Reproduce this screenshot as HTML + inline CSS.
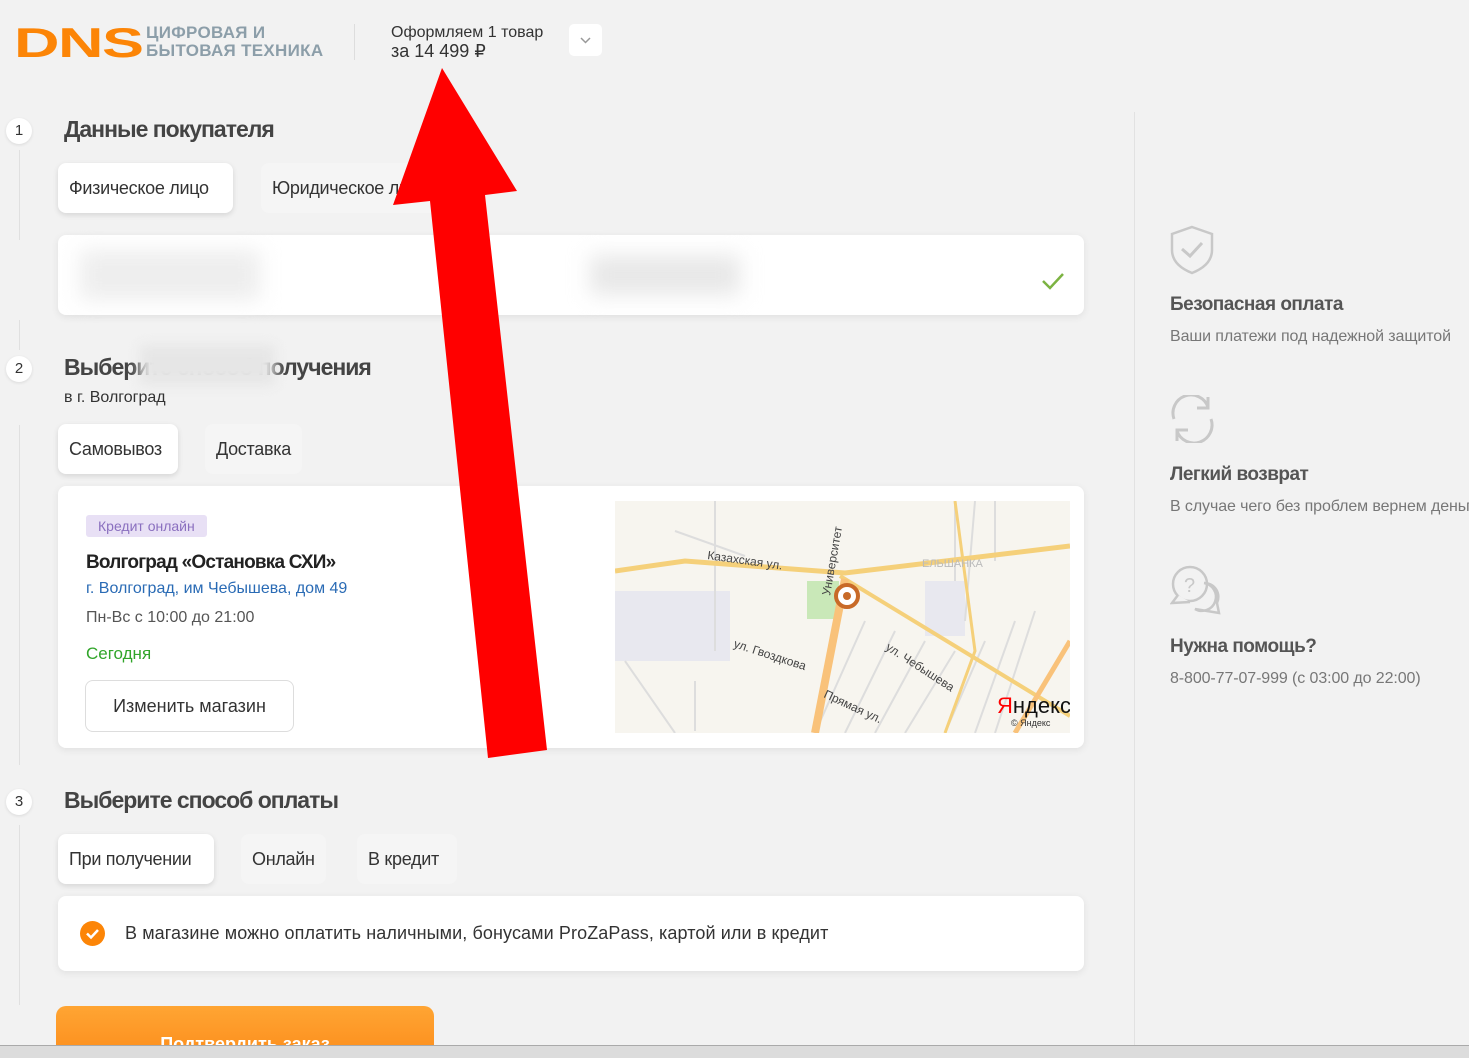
<!DOCTYPE html>
<html><head><meta charset="utf-8"><style>
*{box-sizing:border-box;margin:0;padding:0}
body{width:1469px;height:1058px;overflow:hidden;background:#f2f2f2;font-family:"Liberation Sans","DejaVu Sans",sans-serif;color:#333;position:relative}
.a{position:absolute}
.btn{position:absolute;background:#f5f5f5;border-radius:8px;font-size:18px;color:#333;padding:0 11px;line-height:50px;height:50px;letter-spacing:-.3px}
.btn.sel{background:#fff;box-shadow:0 2px 6px rgba(0,0,0,.12)}
.card{position:absolute;background:#fff;border-radius:8px;box-shadow:0 2px 8px rgba(0,0,0,.08)}
.num{position:absolute;left:6px;width:26px;height:26px;border-radius:50%;background:#fff;font-size:15px;text-align:center;line-height:26px;box-shadow:0 1px 3px rgba(0,0,0,.1)}
.h{position:absolute;left:64px;font-size:23px;font-weight:bold;color:#444;letter-spacing:-1px}
.vl{position:absolute;left:19px;width:1px;background:#e0e0e0}
.side h3{font-size:19px;color:#555;font-weight:bold;letter-spacing:-.5px}
.side p{font-size:16px;color:#777;margin-top:12px;white-space:nowrap;letter-spacing:-.1px}
</style></head><body>
<div class="a" style="left:14px;top:23px;font-size:42px;font-weight:bold;color:#fc8507;letter-spacing:-1px;line-height:40px;transform:scaleX(1.5);transform-origin:0 0">DNS</div>
<div class="a" style="left:146px;top:24px;font-size:17px;font-weight:bold;color:#8c9ea9;line-height:18px;letter-spacing:.3px">ЦИФРОВАЯ И<br>БЫТОВАЯ ТЕХНИКА</div>
<div class="a" style="left:354px;top:24px;width:1px;height:36px;background:#ddd"></div>
<div class="a" style="left:391px;top:24px;font-size:16px;line-height:18px;color:#333">Оформляем 1 товар<br><span style="font-size:18px">за 14 499 ₽</span></div>
<div class="a" style="left:569px;top:24px;width:33px;height:32px;background:#fff;border-radius:5px"><svg width="33" height="32"><path d="M12 14l4.5 4.5L21 14" stroke="#999" stroke-width="1.5" fill="none"/></svg></div>

<div class="vl" style="top:150px;height:90px"></div>
<div class="vl" style="top:320px;height:30px"></div>
<div class="vl" style="top:425px;height:340px"></div>
<div class="vl" style="top:825px;height:180px"></div>

<div class="num" style="top:118px">1</div>
<div class="h" style="top:116px">Данные покупателя</div>
<div class="btn sel" style="left:58px;top:163px;width:175px">Физическое лицо</div>
<div class="btn" style="left:261px;top:163px">Юридическое лицо</div>
<div class="card" style="left:58px;top:235px;width:1026px;height:80px"></div>
<div class="a" style="left:80px;top:250px;width:180px;height:50px;background:#eee;filter:blur(10px)"></div>
<div class="a" style="left:590px;top:255px;width:150px;height:40px;background:#e8e8e8;filter:blur(10px)"></div>
<svg class="a" style="left:1040px;top:270px" width="26" height="22"><path d="M3 11l7 7L23 4" stroke="#7cb342" stroke-width="2.5" fill="none"/></svg>

<div class="num" style="top:356px">2</div>
<div class="h" style="top:354px">Выберите способ получения</div>
<div class="a" style="left:140px;top:345px;width:135px;height:40px;background:#e6e6e6;filter:blur(6px)"></div>
<div class="a" style="left:64px;top:389px;font-size:16px">в г. Волгоград</div>
<div class="btn sel" style="left:58px;top:424px;width:120px">Самовывоз</div>
<div class="btn" style="left:205px;top:424px">Доставка</div>
<div class="card" style="left:58px;top:486px;width:1026px;height:262px"></div>
<div class="a" style="left:86px;top:515px;background:#e8e0f5;color:#8a6fbf;font-size:14px;padding:3px 12px;border-radius:3px">Кредит онлайн</div>
<div class="a" style="left:86px;top:552px;font-size:19px;font-weight:bold;color:#222;letter-spacing:-.8px">Волгоград «Остановка СХИ»</div>
<div class="a" style="left:86px;top:580px;font-size:16px;color:#2a6bb5">г. Волгоград, им Чебышева, дом 49</div>
<div class="a" style="left:86px;top:609px;font-size:16px;color:#555">Пн-Вс с 10:00 до 21:00</div>
<div class="a" style="left:86px;top:644px;font-size:17px;color:#31a52a">Сегодня</div>
<div class="a" style="left:85px;top:680px;width:209px;height:52px;border:1px solid #ddd;border-radius:8px;text-align:center;line-height:50px;font-size:18px;color:#333">Изменить магазин</div>
<svg class="a" style="left:615px;top:501px" width="455" height="232" viewBox="0 0 455 232">
<rect width="455" height="232" fill="#f7f5ef"/>
<rect x="0" y="90" width="115" height="70" fill="#e8e8ef"/>
<rect x="310" y="80" width="40" height="55" fill="#e8e8ef"/>
<rect x="192" y="80" width="32" height="38" fill="#c9e8b8"/>
<g stroke="#ddd" stroke-width="2" fill="none"><path d="M340 0V80M360 0L350 120M380 0v60M250 120L200 232M280 130L230 232M310 140L260 232M340 150L290 232M370 140L330 232M400 120L360 232M420 110L380 232M60 30L130 55M100 0v150M10 160L60 232M80 180v50"/></g>
<path d="M0 70L70 60L230 72L455 45" stroke="#f5d07a" stroke-width="5" fill="none"/>
<path d="M225 75L455 215" stroke="#f5d07a" stroke-width="4" fill="none"/>
<path d="M230 78L200 232" stroke="#f9c27a" stroke-width="8" fill="none"/>
<path d="M340 0L360 150L330 232" stroke="#f5d07a" stroke-width="3" fill="none"/>
<path d="M455 140L400 232" stroke="#f9c27a" stroke-width="5" fill="none"/>
<g font-family="Liberation Sans,sans-serif" font-size="12" fill="#444"><text x="92" y="58" transform="rotate(8 92 58)">Казахская ул.</text><text x="118" y="146" transform="rotate(18 118 146)">ул. Гвоздкова</text><text x="270" y="148" transform="rotate(33 270 148)">ул. Чебышева</text><text x="208" y="196" transform="rotate(25 208 196)">Прямая ул.</text><text x="215" y="95" transform="rotate(-80 215 95)">Университет</text><text x="307" y="66" fill="#bbb" font-size="11">ЕЛЬШАНКА</text></g>
<circle cx="232" cy="95" r="11" fill="#fff" stroke="#c86a28" stroke-width="4"/><circle cx="232" cy="95" r="4" fill="#c86a28"/>
<text x="382" y="212" font-size="22" font-family="Liberation Sans,sans-serif" fill="#111"><tspan fill="#f00">Я</tspan>ндекс</text>
<text x="396" y="225" font-size="9" font-family="Liberation Sans,sans-serif" fill="#333">© Яндекс</text>
</svg>

<div class="num" style="top:789px">3</div>
<div class="h" style="top:787px">Выберите способ оплаты</div>
<div class="btn sel" style="left:58px;top:834px;width:156px">При получении</div>
<div class="btn" style="left:241px;top:834px">Онлайн</div>
<div class="btn" style="left:357px;top:834px;width:100px">В кредит</div>
<div class="card" style="left:58px;top:896px;width:1026px;height:75px"></div>
<div class="a" style="left:80px;top:921px;width:25px;height:25px;border-radius:50%;background:#fc8507"><svg width="25" height="25"><path d="M7 12.5l4 4L18 9" stroke="#fff" stroke-width="2.5" fill="none"/></svg></div>
<div class="a" style="left:125px;top:923px;font-size:18px;color:#333;letter-spacing:.1px">В магазине можно оплатить наличными, бонусами ProZaPass, картой или в кредит</div>
<div class="a" style="left:56px;top:1006px;width:378px;height:52px;background:linear-gradient(#ffa533,#fc8d1c);border-radius:10px;color:#fff;font-weight:bold;font-size:18px;text-align:center;padding-top:28px">Подтвердить заказ</div>
<div class="a" style="left:0;top:1045px;width:1469px;height:13px;background:#dcdcdc;border-top:1px solid #aaa"></div>

<div class="a" style="left:1134px;top:112px;width:1px;height:933px;background:#e2e2e2"></div>
<div class="a side" style="left:1170px;top:225px">
<svg width="45" height="50" viewBox="0 0 45 50"><path d="M22 2L42 9V25C42 37 32 44 22 48C12 44 2 37 2 25V9Z" fill="none" stroke="#c8c8c8" stroke-width="2.5"/><path d="M12 24L20 31L32 18" fill="none" stroke="#c8c8c8" stroke-width="3"/></svg>
<h3 style="margin-top:14px">Безопасная оплата</h3><p>Ваши платежи под надежной защитой</p></div>
<div class="a side" style="left:1170px;top:395px">
<svg width="45" height="48" viewBox="0 0 45 48"><path d="M4 24A18 18 0 0 1 38 12M41 24A18 18 0 0 1 7 36" fill="none" stroke="#c8c8c8" stroke-width="3"/><path d="M38 2V13H27M7 46V35H18" fill="none" stroke="#c8c8c8" stroke-width="3"/></svg>
<h3 style="margin-top:16px">Легкий возврат</h3><p>В случае чего без проблем вернем деньги</p></div>
<div class="a side" style="left:1170px;top:565px">
<svg width="52" height="50" viewBox="0 0 52 50"><circle cx="20" cy="19" r="17" fill="#f2f2f2" stroke="#c8c8c8" stroke-width="2.5"/><path d="M20 37L2 38L8 30" fill="#f2f2f2" stroke="#c8c8c8" stroke-width="2.5"/><path d="M34 18A14 14 0 1 1 25 44L49 48L47 38A14 14 0 0 0 34 18" fill="none" stroke="#c8c8c8" stroke-width="2.5"/><text x="14" y="27" font-size="20" fill="#c8c8c8" font-family="Liberation Sans,sans-serif">?</text></svg>
<h3 style="margin-top:16px">Нужна помощь?</h3><p>8-800-77-07-999 (с 03:00 до 22:00)</p></div>

<svg class="a" style="left:0;top:0" width="1469" height="1058"><polygon points="442,68 517,191 485,195 547,750 488,758 430,201 393,205" fill="#f00"/></svg>
</body></html>
